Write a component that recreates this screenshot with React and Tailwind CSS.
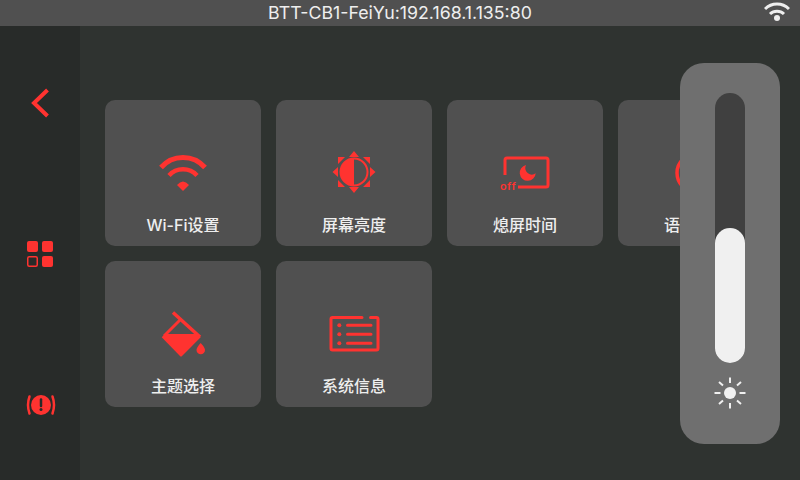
import React from 'react';

const RED = '#ff3330';

function WifiIcon() {
  return (
    <svg width="48" height="48" viewBox="0 0 48 48" fill="none">
      <path d="M2 19.500A29 29 0 0 1 46 19.500" stroke={RED} strokeWidth="5" />
      <path d="M10 27.500A19 19 0 0 1 38 27.500" stroke={RED} strokeWidth="4.500" />
      <path d="M18 37Q24 30 30 37L24 43Z" fill={RED} />
    </svg>
  );
}

function BrightnessIcon() {
  return (
    <svg width="48" height="48" viewBox="0 0 48 48" fill="none">
      <circle cx="24" cy="24" r="13.500" stroke={RED} strokeWidth="2" />
      <path d="M24 10.500A13.500 13.500 0 0 0 24 37.500Z" fill={RED} />
      <path d="M24 3L29 9H19ZM24 45L19 39H29ZM2.500 24L8 19V29ZM45.500 24L40 29V19Z" fill={RED} />
      <path d="M8 9H15L8 16ZM40 9V16L33 9ZM8 39V32L15 39ZM40 39H33L40 32Z" fill={RED} />
    </svg>
  );
}

function ScreenOffIcon() {
  return (
    <svg width="48" height="48" viewBox="0 0 48 48" fill="none" className="overflow-visible">
      <path d="M4 27V12Q4 10 6 10H45Q47 10 47 12V37Q47 39 45 39H17" stroke={RED} strokeWidth="3" />
      <path d="M25 17A8 8 0 1 0 34.700 25.300A6.600 6.600 0 0 1 25 17Z" fill={RED} />
      <text x="-1" y="41.500" fill={RED} fontSize="11.500" fontWeight="500" letterSpacing="0.500" fontFamily="Roboto, sans-serif">off</text>
    </svg>
  );
}

function GlobeIcon() {
  return (
    <svg width="48" height="48" viewBox="0 0 48 48" fill="none">
      <circle cx="24" cy="25" r="19" stroke={RED} strokeWidth="3.500" />
    </svg>
  );
}

function ThemeIcon() {
  return (
    <svg width="48" height="48" viewBox="0 0 48 48" fill="none">
      <path d="M14 3.500L41 28" stroke={RED} strokeWidth="3.500" />
      <path d="M5 27L22 10" stroke={RED} strokeWidth="3" />
      <path d="M2.700 28.300L6 25H38.500L41.700 28.300L23 47Q22 48 21 47Z" fill={RED} />
      <path d="M41.700 34Q46 38.500 46 41A4.200 4.200 0 0 1 37.500 41Q37.500 38.500 41.700 34Z" fill={RED} />
    </svg>
  );
}

function InfoIcon() {
  return (
    <svg width="48" height="48" viewBox="0 0 48 48" fill="none" className="overflow-visible">
      <path d="M32 8.500H2.500Q1 8.500 1 10V39.500Q1 41 2.500 41H46.500Q48 41 48 39.500V10Q48 8.500 46.500 8.500H40.500" stroke={RED} strokeWidth="3" strokeLinecap="round" />
      <path d="M17.500 16.300H41M17.500 25.300H41M17.500 34.300H41" stroke={RED} strokeWidth="3" strokeLinecap="round" />
      <circle cx="9.300" cy="16.300" r="2" fill={RED} />
      <circle cx="9.300" cy="25.300" r="2" fill={RED} />
      <circle cx="9.300" cy="34.300" r="2" fill={RED} />
    </svg>
  );
}

const items = [
  { label: 'Wi-Fi设置', icon: <WifiIcon /> },
  { label: '屏幕亮度', icon: <BrightnessIcon /> },
  { label: '熄屏时间', icon: <ScreenOffIcon /> },
  { label: '语言设置', icon: <GlobeIcon /> },
  { label: '主题选择', icon: <ThemeIcon /> },
  { label: '系统信息', icon: <InfoIcon /> },
];

function MenuCard({ label, icon }) {
  return (
    <div className="flex h-[146px] flex-col items-center rounded-[10px] bg-[#505050] pt-[48px]">
      <div className="flex h-[48px] items-center justify-center">{icon}</div>
      <div className="mt-[19px] text-[16px] leading-5 font-medium text-[#eeeeee]">{label}</div>
    </div>
  );
}

function SmallSun() {
  return (
    <svg width="36" height="36" viewBox="0 0 36 36" fill="none">
      <circle cx="18" cy="18" r="6" fill="#f0f0f0" />
      <path
        d="M18 2.500V8M18 28V33.500M2.500 18H8.500M27.500 18H33.500M7 7L11 10.500M29 7L25 10.500M7 29L11 25.500M29 29L25 25.500"
        stroke="#f0f0f0"
        strokeWidth="2"
      />
    </svg>
  );
}

export default function App() {
  return (
    <div className="relative flex h-[480px] w-[800px] flex-col overflow-hidden bg-[#2f3330] font-['Inter','Noto_Sans_CJK_SC',sans-serif]">
      <header className="relative flex h-[26px] shrink-0 items-center justify-center bg-[#505050] text-[17.75px] text-[#eeeeee]">
        BTT-CB1-FeiYu:192.168.1.135:80
        <svg className="absolute top-[1px] right-[10px]" width="26" height="21" viewBox="0 0 26 21" fill="none">
          <path d="M1 8A17 17 0 0 1 25 8" stroke="#eeeeee" strokeWidth="3" />
          <path d="M6 13A10 10 0 0 1 20 13" stroke="#eeeeee" strokeWidth="3" />
          <circle cx="13" cy="17" r="3" fill="#eeeeee" />
        </svg>
      </header>

      <div className="flex flex-1">
        <aside className="flex w-[80px] shrink-0 flex-col bg-[#282b29] pt-[2px]">
          <button className="flex flex-1 items-center justify-center">
            <svg width="24" height="30" viewBox="0 0 24 30" fill="none">
              <path d="M19.500 2L6 15L19.500 28" stroke={RED} strokeWidth="4" />
            </svg>
          </button>
          <button className="flex flex-1 items-center justify-center">
            <svg width="26" height="26" viewBox="0 0 26 26" fill="none">
              <rect width="11" height="11" rx="2" fill={RED} />
              <rect x="15" width="11" height="11" rx="2" fill={RED} />
              <rect x="0.750" y="15.750" width="9.500" height="9.500" rx="1.500" stroke={RED} strokeWidth="1.500" />
              <rect x="15" y="15" width="11" height="11" rx="2" fill={RED} />
            </svg>
          </button>
          <button className="flex flex-1 items-center justify-center">
            <svg className="translate-x-[1px]" width="32" height="22" viewBox="0 0 32 22" fill="none">
              <circle cx="16" cy="11" r="10" fill={RED} />
              <path d="M16 5.500V12" stroke="#282b29" strokeWidth="2.500" strokeLinecap="round" />
              <circle cx="16" cy="15.500" r="1.500" fill="#282b29" />
              <path d="M4.500 2.500Q1.500 11 4.500 19.500M27.500 2.500Q30.500 11 27.500 19.500" stroke={RED} strokeWidth="2.500" strokeLinecap="round" />
            </svg>
          </button>
        </aside>

        <main className="grid flex-1 grid-cols-[repeat(4,156px)] content-start gap-[15px] pt-[74px] pl-[25px]">
          {items.map((item) => (
            <MenuCard key={item.label} label={item.label} icon={item.icon} />
          ))}
        </main>
      </div>

      <div className="absolute top-[63px] left-[680px] flex h-[381px] w-[100px] flex-col items-center rounded-[24px] bg-[#6f6f6f] pt-[30px]">
        <div className="flex h-[270px] w-[30px] flex-col justify-end rounded-[15px] bg-[#404040]">
          <div className="h-[135px] rounded-[15px] bg-[#f0f0f0]" />
        </div>
        <div className="mt-[12px]">
          <SmallSun />
        </div>
      </div>
    </div>
  );
}
